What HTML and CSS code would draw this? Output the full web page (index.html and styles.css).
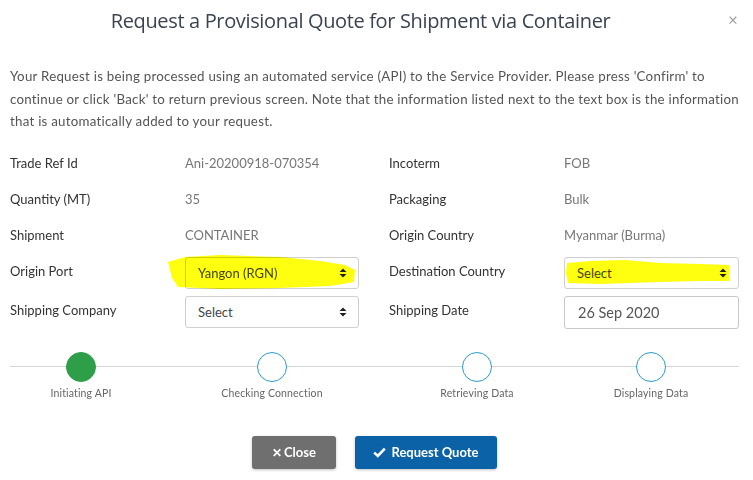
FILE: index.html
```html
<!DOCTYPE html>
<html>
<head>
<meta charset="utf-8">
<link rel="stylesheet" href="styles.css">
</head>
<body>
<div class="modal">
  <div class="modal-header">
    <h1 class="modal-title">Request a Provisional Quote for Shipment via Container</h1>
    <span class="close-x">×</span>
  </div>
  <p class="intro">Your Request is being processed using an automated service (API) to the Service Provider. Please press 'Confirm' to continue or click 'Back' to return previous screen. Note that the information listed next to the text box is the information that is automatically added to your request.</p>

  <div class="form-grid">
    <div class="col">
      <div class="row"><span class="label">Trade Ref Id</span><span class="value">Ani-20200918-070354</span></div>
      <div class="row"><span class="label">Quantity (MT)</span><span class="value">35</span></div>
      <div class="row"><span class="label">Shipment</span><span class="value">CONTAINER</span></div>
      <div class="row field-row">
        <span class="label">Origin Port</span>
        <div class="field">
          <div class="select">Yangon (RGN)<svg class="arrows" width="8" height="10" viewBox="0 0 8 10"><path d="M4 0.5 L7.5 4 L0.5 4 Z M4 9.5 L7.5 6 L0.5 6 Z" fill="#222"/></svg></div>
          <svg class="hl hl-origin" width="195" height="42" viewBox="0 0 195 42"><path d="M3 10 L20 5 L55 3 L115 5 L155 9 L180 13 L190 18 L189 30 L165 34 L115 36 L55 37 L13 35 L7 26 Z" fill="#ffff10"/></svg>
        </div>
      </div>
      <div class="row field-row second">
        <span class="label">Shipping Company</span>
        <div class="field">
          <div class="select">Select<svg class="arrows" width="8" height="10" viewBox="0 0 8 10"><path d="M4 0.5 L7.5 4 L0.5 4 Z M4 9.5 L7.5 6 L0.5 6 Z" fill="#222"/></svg></div>
        </div>
      </div>
    </div>
    <div class="col">
      <div class="row"><span class="label">Incoterm</span><span class="value">FOB</span></div>
      <div class="row"><span class="label">Packaging</span><span class="value">Bulk</span></div>
      <div class="row"><span class="label">Origin Country</span><span class="value">Myanmar (Burma)</span></div>
      <div class="row field-row">
        <span class="label">Destination Country</span>
        <div class="field">
          <div class="select">Select<svg class="arrows" width="8" height="10" viewBox="0 0 8 10"><path d="M4 0.5 L7.5 4 L0.5 4 Z M4 9.5 L7.5 6 L0.5 6 Z" fill="#222"/></svg></div>
          <svg class="hl hl-dest" width="175" height="32" viewBox="0 0 175 32"><path d="M7 8 L30 6 L65 5 L100 8 L140 9 L169 10 L170 26 L140 26 L100 27 L40 29 L8 28 L6 18 Z" fill="#ffff10"/></svg>
        </div>
      </div>
      <div class="row field-row second">
        <span class="label">Shipping Date</span>
        <div class="field">
          <div class="date-input">26 Sep 2020</div>
        </div>
      </div>
    </div>
  </div>

  <div class="stepper">
    <div class="step"><span class="dot done"></span><span class="step-label">Initiating API</span></div>
    <div class="step"><span class="dot"></span><span class="step-label">Checking Connection</span></div>
    <div class="step"><span class="dot"></span><span class="step-label">Retrieving Data</span></div>
    <div class="step"><span class="dot"></span><span class="step-label">Displaying Data</span></div>
  </div>

  <div class="actions">
    <button class="btn btn-close"><span class="ico">✕</span>Close</button>
    <button class="btn btn-primary"><svg class="check" width="13" height="11" viewBox="0 0 13 11"><path d="M1.2 5.6 L4.8 9 L11.8 1.6" fill="none" stroke="#fff" stroke-width="2.6"/></svg>Request Quote</button>
  </div>
</div>
</body>
</html>
```

FILE: styles.css
```css
* { box-sizing: border-box; }
html, body { margin: 0; padding: 0; background: #fff; }
body {
  font-family: Lato, "Liberation Sans", sans-serif;
  color: #333;
  width: 753px;
  height: 480px;
  overflow: hidden;
}
.modal { padding: 0 14px 0 10px; }
.modal-header {
  display: flex;
  align-items: flex-start;
  height: 56px;
  padding-top: 7px;
}
.modal-title {
  flex: 1;
  margin: 0;
  padding-right: 10px;
  text-align: center;
  font-family: "Open Sans", sans-serif;
  font-weight: 400;
  font-size: 20px;
  line-height: 28px;
  color: #3b4350;
  letter-spacing: -0.35px;
}
.close-x {
  width: 24px;
  text-align: center;
  font-size: 17px;
  line-height: 20px;
  color: #a0a0a0;
  margin-top: 3px;
  margin-right: -6px;
}
.intro {
  margin: 9px -9px 0 0;
  font-size: 13.3px;
  letter-spacing: 0.25px;
  line-height: 22.5px;
  color: #555;
}
.form-grid {
  display: grid;
  grid-template-columns: 349px 350px;
  column-gap: 30px;
  margin-top: 12px;
}
.row {
  display: flex;
  align-items: center;
  height: 36px;
}
.label {
  width: 175px;
  flex: none;
  font-size: 13px;
  color: #333;
}
.value {
  font-size: 13px;
  color: #777;
}
.field-row { align-items: flex-start; }
.field-row .label { line-height: 36px; }
.field-row.second { margin-top: 3px; }
.field {
  position: relative;
  flex: 1;
  margin-top: 4px;
}
.select {
  display: flex;
  align-items: center;
  justify-content: space-between;
  height: 32px;
  padding: 0 11px 0 12px;
  border: 1px solid #cfcfcf;
  border-radius: 3px;
  font-size: 13px;
  color: #444;
  background: #fff;
}
.date-input {
  display: flex;
  align-items: center;
  height: 33px;
  padding: 0 13px;
  border: 1px solid #c8c8c8;
  border-radius: 3px;
  font-size: 14.5px;
  color: #555;
}
.hl {
  position: absolute;
  mix-blend-mode: multiply;
  pointer-events: none;
}
.hl-origin { left: -20px; top: -5px; }
.hl-dest { left: -4px; top: -2px; }

.stepper {
  position: relative;
  display: grid;
  grid-template-columns: 142px 240px 170px 178px;
  margin-top: 24px;
}
.stepper::before {
  content: "";
  position: absolute;
  left: 0;
  right: 0;
  top: 14px;
  border-top: 1px solid #d6d6d6;
}
.step {
  position: relative;
  display: flex;
  flex-direction: column;
  align-items: center;
}
.dot {
  width: 30px;
  height: 30px;
  border-radius: 50%;
  border: 1.5px solid #2a9cc4;
  background: #fff;
}
.dot.done { background: #2e9f48; border-color: #2e9f48; }
.step-label {
  margin-top: 5px;
  font-size: 10.5px;
  letter-spacing: 0.15px;
  color: #666;
}
.actions {
  display: flex;
  justify-content: center;
  gap: 19px;
  margin-top: 37px;
}
.btn {
  display: inline-flex;
  align-items: center;
  justify-content: center;
  height: 33px;
  border: none;
  border-radius: 3px;
  font-family: Lato, "Liberation Sans", sans-serif;
  font-weight: 700;
  font-size: 13px;
  color: #fff;
  box-shadow: 0 1px 3px rgba(0,0,0,0.25);
}
.btn-close { width: 84px; background: #6f6f6f; }
.btn-close .ico { font-size: 12px; margin-right: 2px; }
.btn-primary { width: 142px; background: #0b62a7; }
.check { margin-right: 5px; }
```
